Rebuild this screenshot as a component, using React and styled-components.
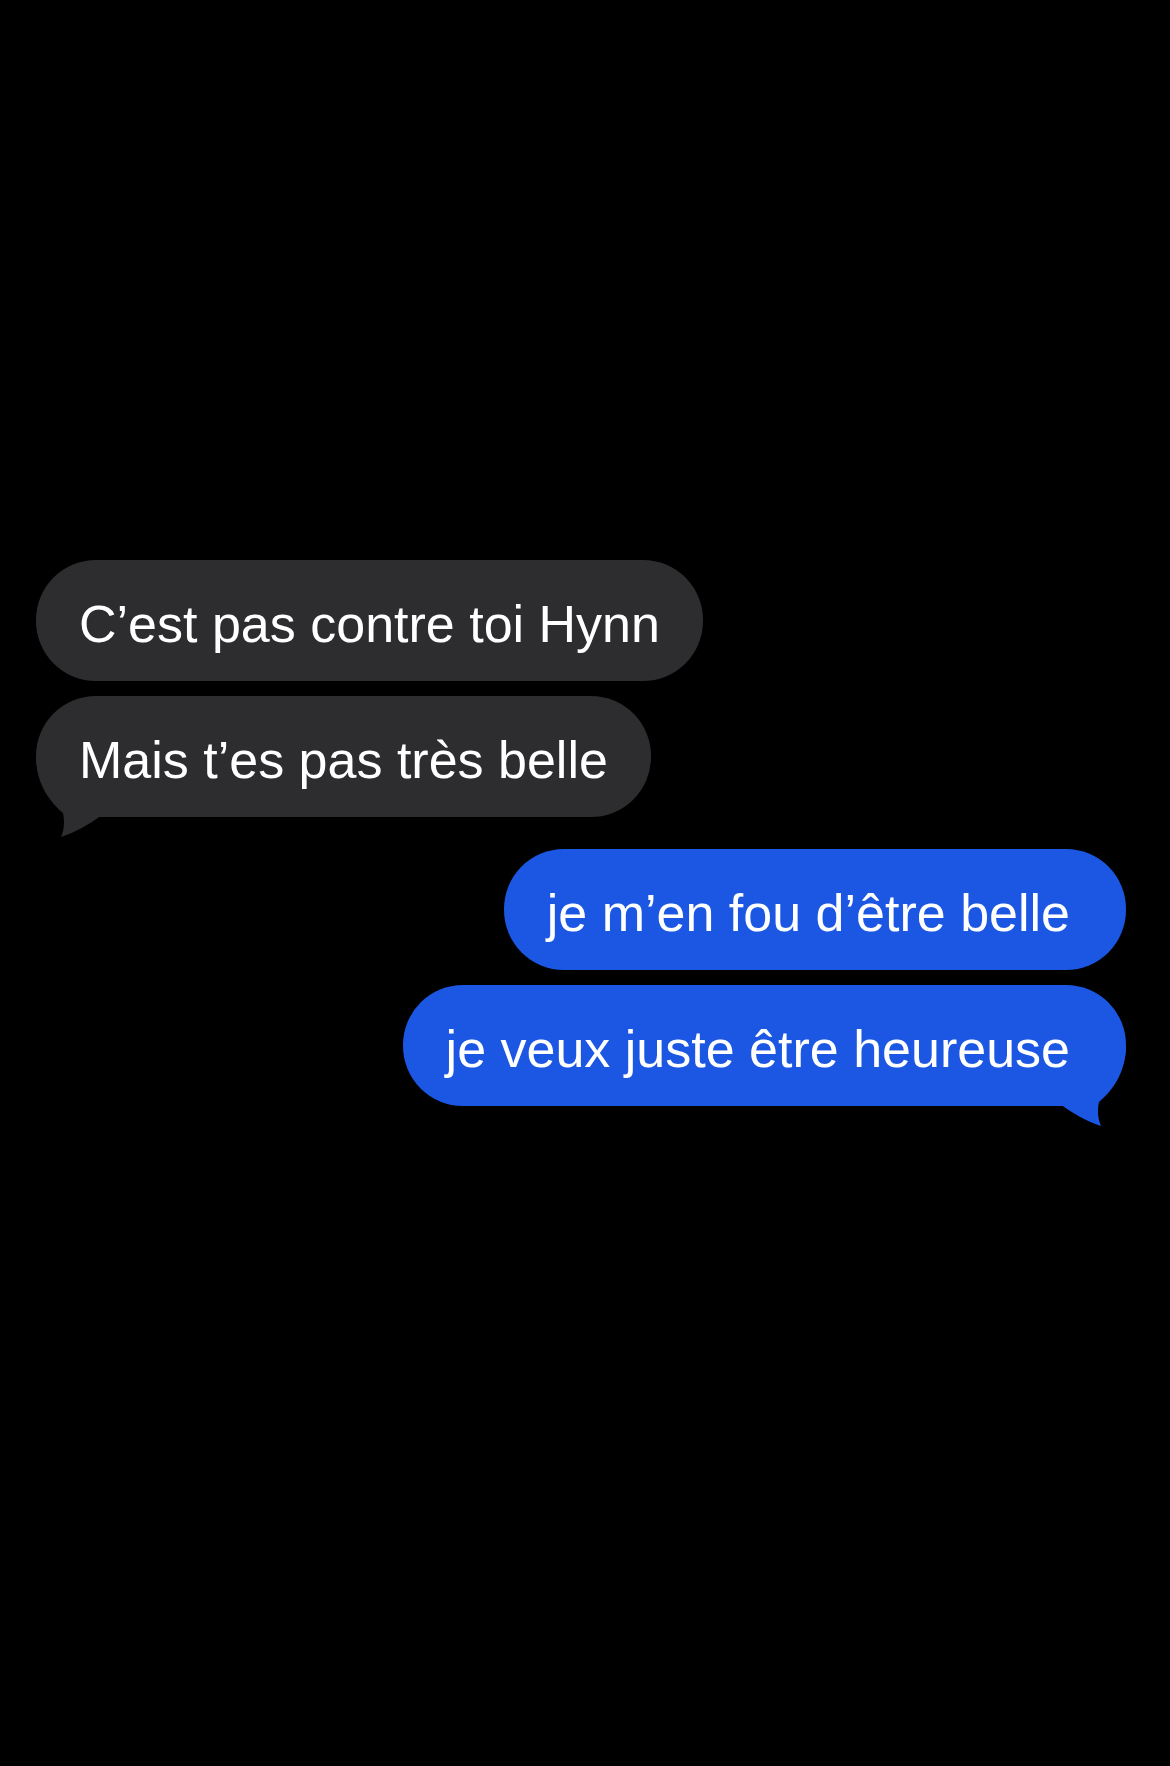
import styled, { createGlobalStyle } from 'styled-components';

const GlobalStyle = createGlobalStyle`
  html, body {
    margin: 0;
    padding: 0;
    background: #000;
  }
  body {
    font-family: 'Liberation Sans', Arial, sans-serif;
    -webkit-font-smoothing: antialiased;
  }
`;

const Screen = styled.main`
  min-height: 1766px;
  background: #000;
  padding: 560px 44px 0 36px;
  box-sizing: border-box;
  display: flex;
  flex-direction: column;
`;

const Group = styled.section`
  display: flex;
  flex-direction: column;
  align-items: ${(p) => (p.$mine ? 'flex-end' : 'flex-start')};
  gap: 15px;
  & + & {
    margin-top: 32px;
  }
`;

const Bubble = styled.div`
  position: relative;
  box-sizing: border-box;
  height: 121px;
  padding: 32px ${(p) => (p.$mine ? '56px' : '43px')} 25px 43px;
  border-radius: 60px;
  background: ${(p) => (p.$mine ? '#1b57e2' : '#2d2d30')};
  color: #fff;
  font-size: 52px;
  line-height: 64px;
  white-space: nowrap;
  span {
    position: relative;
  }
  svg {
    position: absolute;
    top: 0;
    ${(p) => (p.$mine ? 'right: 0;' : 'left: 0;')}
  }
`;

function Tail({ mine }) {
  const color = mine ? '#1b57e2' : '#2d2d30';
  return (
    <svg
      width="80"
      height="145"
      viewBox="0 0 80 145"
      style={mine ? { transform: 'scaleX(-1)' } : undefined}
    >
      <path
        d="M0 60 C0 88 14 106 27 117 C29 126 28 134 25 141 C40 136 54 128 66 119 L80 119 L80 60 Z"
        fill={color}
      />
    </svg>
  );
}

function Message({ text, mine, tail }) {
  return (
    <Bubble $mine={mine}>
      {tail && <Tail mine={mine} />}
      <span>{text}</span>
    </Bubble>
  );
}

const thread = [
  {
    mine: false,
    lines: ['C’est pas contre toi Hynn', 'Mais t’es pas très belle'],
  },
  {
    mine: true,
    lines: ['je m’en fou d’être belle', 'je veux juste être heureuse'],
  },
];

export default function App() {
  return (
    <>
      <GlobalStyle />
      <Screen>
        {thread.map((g, i) => (
          <Group key={i} $mine={g.mine}>
            {g.lines.map((line, j) => (
              <Message
                key={j}
                text={line}
                mine={g.mine}
                tail={j === g.lines.length - 1}
              />
            ))}
          </Group>
        ))}
      </Screen>
    </>
  );
}
